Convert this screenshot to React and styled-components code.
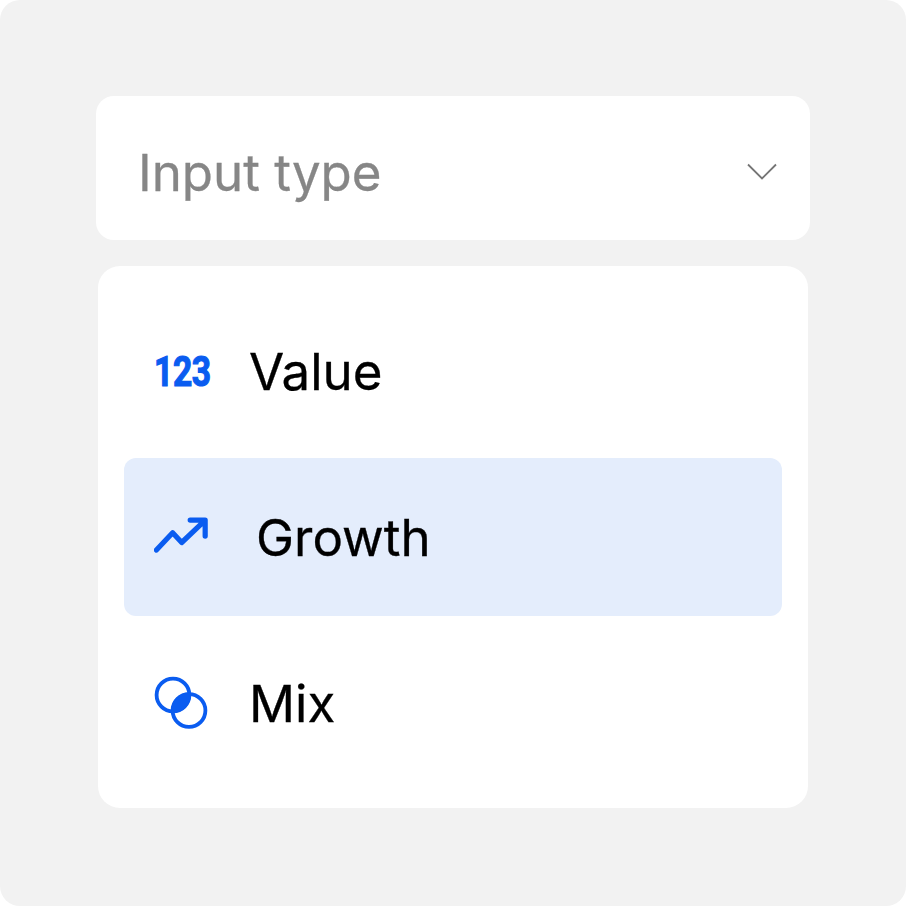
import React from "react";
import styled, { createGlobalStyle } from "styled-components";

const GlobalStyle = createGlobalStyle`
  html, body {
    margin: 0;
    padding: 0;
    background: #ffffff;
    font-family: "Inter", "Liberation Sans", sans-serif;
  }
`;

const options = [
  { id: "value", label: "Value", icon: <NumberIcon>123</NumberIcon> },
  { id: "growth", label: "Growth", icon: <GrowthIcon />, active: true },
  { id: "mix", label: "Mix", icon: <MixIcon /> },
];

function GrowthIcon() {
  return (
    <svg width="58" height="40" viewBox="0 0 58 40" fill="none">
      <path
        d="M2.500 33.500 L19.300 15.500 L28.700 25.700 L52 3.500 M37.500 2.500 H53 V19"
        stroke="#0a5cf0"
        strokeWidth="5.400"
        strokeLinecap="round"
        strokeLinejoin="round"
      />
    </svg>
  );
}

function MixIcon() {
  return (
    <svg width="54" height="54" viewBox="0 0 54 54" fill="none">
      <circle cx="19" cy="19" r="16.400" stroke="#0a5cf0" strokeWidth="3.800" />
      <circle cx="35" cy="34.500" r="16.400" stroke="#0a5cf0" strokeWidth="3.800" />
      <path
        d="M17.200 36.850 A18 18 0 0 1 36.800 16.650 A18 18 0 0 1 17.200 36.850 Z"
        fill="#0a5cf0"
      />
    </svg>
  );
}

function NumberIcon({ children }) {
  return <Digits>{children}</Digits>;
}

export default function App() {
  return (
    <>
      <GlobalStyle />
      <Frame>
        <SelectBox>
          <Placeholder>Input type</Placeholder>
          <svg width="30" height="18" viewBox="0 0 30 18" fill="none">
            <path d="M1 1.500 L15 15.500 L29 1.500" stroke="#757575" strokeWidth="1.800" />
          </svg>
        </SelectBox>
        <OptionList>
          {options.map((option) => (
            <OptionRow key={option.id} $active={option.active}>
              <IconSlot>{option.icon}</IconSlot>
              <OptionLabel $active={option.active}>{option.label}</OptionLabel>
            </OptionRow>
          ))}
        </OptionList>
      </Frame>
    </>
  );
}

const Frame = styled.div`
  box-sizing: border-box;
  width: 906px;
  height: 906px;
  padding: 96px 96px 98px;
  display: flex;
  flex-direction: column;
  gap: 26px;
  border-radius: 20px;
  background: #f2f2f2;
`;

const SelectBox = styled.div`
  box-sizing: border-box;
  height: 144px;
  padding: 8px 33px 0 42px;
  display: flex;
  align-items: center;
  justify-content: space-between;
  border-radius: 18px;
  background: #ffffff;
`;

const Placeholder = styled.span`
  font-size: 51px;
  color: #868686;
  -webkit-text-stroke: 0.3px #868686;
`;

const OptionList = styled.div`
  box-sizing: border-box;
  height: 542px;
  margin: 0 2px;
  padding: 26px;
  display: flex;
  flex-direction: column;
  gap: 8px;
  border-radius: 22px;
  background: #ffffff;
`;

const OptionRow = styled.div`
  height: 158px;
  padding-left: 30px;
  display: flex;
  align-items: center;
  border-radius: 12px;
  background: ${(p) => (p.$active ? "#e4edfc" : "transparent")};
`;

const IconSlot = styled.div`
  width: 56px;
  display: flex;
  align-items: center;
  justify-content: flex-start;
`;

const Digits = styled.span`
  display: inline-block;
  transform: scaleX(0.8);
  transform-origin: left center;
  font-family: "Roboto", sans-serif;
  font-size: 42px;
  font-weight: 700;
  letter-spacing: -0.500px;
  color: #0a5cf0;
  -webkit-text-stroke: 1.2px #0a5cf0;
`;

const OptionLabel = styled.span`
  margin-left: ${(p) => (p.$active ? "46px" : "39px")};
  font-size: 51px;
  color: #000000;
  -webkit-text-stroke: 0.3px #000000;
`;
